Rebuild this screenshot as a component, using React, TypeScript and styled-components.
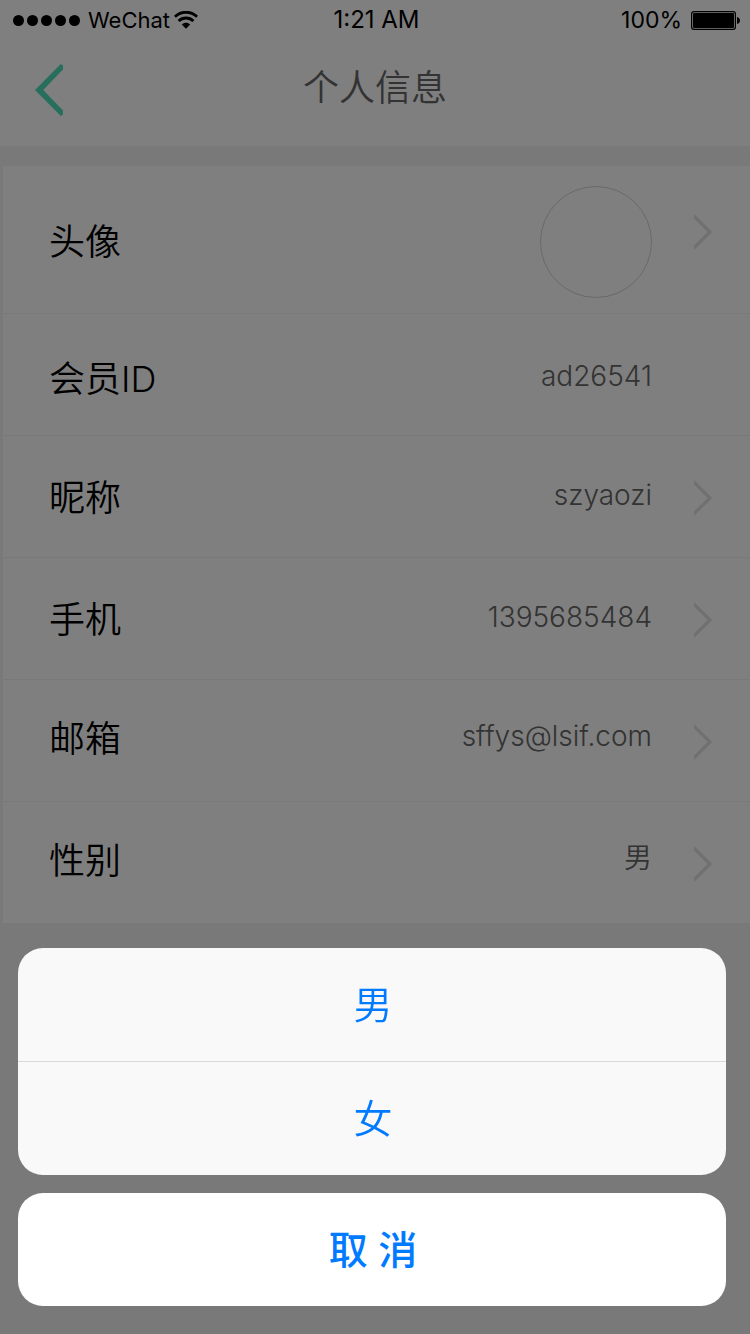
import React from "react";
import styled, { createGlobalStyle } from "styled-components";

const GlobalStyle = createGlobalStyle`
  *, *::before, *::after { box-sizing: border-box; }
  body {
    margin: 0;
    background: #f2f2f2;
    font-family: Inter, "Noto Sans CJK SC", sans-serif;
    color: #000;
  }
  button {
    margin: 0;
    padding: 0;
    border: 0;
    background: none;
    font: inherit;
    color: inherit;
    cursor: pointer;
  }
`;

const Page = styled.main`
  min-height: 100vh;
`;

const Header = styled.header`
  height: 146px;
  background: #fff;
`;

const StatusBar = styled.div`
  display: grid;
  grid-template-columns: 1fr auto 1fr;
  align-items: center;
  height: 40px;
  padding: 0 10px 0 13px;
  font-size: 23px;
  line-height: 40px;
`;

const StatusGroup = styled.div<{ $end?: boolean }>`
  display: flex;
  align-items: center;
  justify-content: ${(p) => (p.$end ? "flex-end" : "flex-start")};
  gap: ${(p) => (p.$end ? 9 : 4)}px;
`;

const Carrier = styled.span`
  font-size: 22px;
`;

const Clock = styled.span`
  font-size: 24px;
`;

const Dots = styled.div`
  display: flex;
  gap: 3px;
  margin-right: 4px;
`;

const Dot = styled.span`
  width: 11px;
  height: 11px;
  border-radius: 50%;
  background: #000;
`;

const NavBar = styled.nav`
  display: grid;
  grid-template-columns: 1fr auto 1fr;
  align-items: start;
  padding: 24px 35px 0;
`;

const BackButton = styled.button`
  justify-self: start;
  display: flex;
  color: #50dcb8;
`;

const Title = styled.h1`
  margin: 0;
  font-size: 36px;
  font-weight: 350;
  line-height: 48px;
  color: #666;
`;

const List = styled.ul`
  margin: 20px 0 0 3px;
  padding: 0;
  list-style: none;
  background: #fff;
`;

const Item = styled.li`
  & + & {
    border-top: 1px solid #f2f2f2;
  }
`;

const Row = styled.button<{ $tall?: boolean }>`
  display: flex;
  align-items: center;
  width: 100%;
  height: ${(p) => (p.$tall ? 147 : 121)}px;
  padding: ${(p) => (p.$tall ? "20px 37px 15px 46px" : "2px 37px 0 46px")};
  text-align: left;
`;

type Placement = "low" | "middle" | "high";

const fieldPadding: Record<Placement, string> = {
  low: "6px 0 0",
  middle: "0",
  high: "0 0 6px",
};

const Field = styled.span<{ $placement: Placement }>`
  flex: 1;
  display: flex;
  align-items: center;
  justify-content: space-between;
  padding: ${(p) => fieldPadding[p.$placement]};
`;

const Label = styled.span`
  font-size: 36px;
  font-weight: 350;
  line-height: 52px;
`;

const Value = styled.span`
  padding-bottom: 6px;
  font-size: 28px;
  font-weight: 350;
  line-height: 40px;
  color: #666;
`;

const Avatar = styled.span`
  width: 112px;
  height: 112px;
  border: 1px solid #d2d2d2;
  border-radius: 50%;
`;

const Accessory = styled.span<{ $tall?: boolean }>`
  display: flex;
  width: 19px;
  margin-left: 42px;
  padding-bottom: ${(p) => (p.$tall ? 20 : 0)}px;
`;

const Backdrop = styled.div`
  position: fixed;
  inset: 0;
  display: flex;
  flex-direction: column;
  justify-content: flex-end;
  gap: 18px;
  padding: 0 24px 28px 18px;
  background: rgba(0, 0, 0, 0.5);
`;

const Options = styled.div`
  overflow: hidden;
  border-radius: 25px;
  background: #f9f9f9;
`;

const SheetButton = styled.button<{ $cancel?: boolean }>`
  display: block;
  width: 100%;
  height: 113px;
  padding-left: 2px;
  border-radius: ${(p) => (p.$cancel ? 25 : 0)}px;
  background: ${(p) => (p.$cancel ? "#fff" : "transparent")};
  font-size: 39px;
  font-weight: ${(p) => (p.$cancel ? 500 : 350)};
  line-height: 56px;
  color: #007aff;

  & + & {
    height: 114px;
    border-top: 1px solid #d9d9db;
  }
`;

const WifiIcon = () => (
  <svg width="24" height="18" viewBox="0 0 24 18" aria-hidden="true">
    <g fill="none" stroke="#000" strokeWidth="2.9">
      <path d="M.9 5.8C7.1-.2 16.9-.2 23.1 5.8" />
      <path d="M4.6 10c4.1-4 10.7-4 14.8 0" />
    </g>
    <path d="M7.8 13.4c2.4-2.1 6-2.1 8.4 0L12 17.8z" />
  </svg>
);

const BatteryIcon = () => (
  <svg width="49" height="19" viewBox="0 0 49 19" aria-hidden="true">
    <rect x=".6" y=".6" width="43.8" height="17.8" rx="2.4" fill="none" stroke="#000" strokeWidth="1.2" />
    <rect x="2" y="2" width="41" height="15" rx="1" />
    <path d="M46 6c4 1 4 6 0 7z" />
  </svg>
);

const BackIcon = () => (
  <svg width="28" height="52" viewBox="0 0 28 52" aria-hidden="true">
    <polygon points="25.8,0 28,1.6 28,5.4 8.2,26 28,46.6 28,50.4 25.8,52 0,26" fill="currentColor" />
  </svg>
);

const ChevronIcon = () => (
  <svg width="19" height="36" viewBox="0 0 19 36" aria-hidden="true">
    <polygon points="0,0 18.3,18 0,36 0,31.4 13.6,18 0,4.6" fill="#e0e0e0" />
  </svg>
);

interface Entry {
  label: string;
  value: string;
  placement: Placement;
  editable: boolean;
}

const entries: Entry[] = [
  { label: "会员ID", value: "ad26541", placement: "low", editable: false },
  { label: "昵称", value: "szyaozi", placement: "middle", editable: true },
  { label: "手机", value: "1395685484", placement: "middle", editable: true },
  { label: "邮箱", value: "sffys@lsif.com", placement: "high", editable: true },
  { label: "性别", value: "男", placement: "high", editable: true },
];

export default function App() {
  return (
    <>
      <GlobalStyle />
      <Page lang="zh-CN">
        <Header>
          <StatusBar>
            <StatusGroup>
              <Dots>
                {[0, 1, 2, 3, 4].map((n) => (
                  <Dot key={n} />
                ))}
              </Dots>
              <Carrier>WeChat</Carrier>
              <WifiIcon />
            </StatusGroup>
            <Clock>1:21 AM</Clock>
            <StatusGroup $end>
              <span>100%</span>
              <BatteryIcon />
            </StatusGroup>
          </StatusBar>
          <NavBar>
            <BackButton type="button" aria-label="返回">
              <BackIcon />
            </BackButton>
            <Title>个人信息</Title>
          </NavBar>
        </Header>
        <List>
          <Item>
            <Row type="button" $tall>
              <Field $placement="middle">
                <Label>头像</Label>
                <Avatar />
              </Field>
              <Accessory $tall>
                <ChevronIcon />
              </Accessory>
            </Row>
          </Item>
          {entries.map((e) => (
            <Item key={e.label}>
              <Row as={e.editable ? "button" : "div"}>
                <Field $placement={e.placement}>
                  <Label>{e.label}</Label>
                  <Value>{e.value}</Value>
                </Field>
                <Accessory>{e.editable && <ChevronIcon />}</Accessory>
              </Row>
            </Item>
          ))}
        </List>
      </Page>
      <Backdrop role="dialog" aria-modal="true" aria-label="性别">
        <Options>
          <SheetButton type="button">男</SheetButton>
          <SheetButton type="button">女</SheetButton>
        </Options>
        <SheetButton type="button" $cancel>
          取 消
        </SheetButton>
      </Backdrop>
    </>
  );
}
